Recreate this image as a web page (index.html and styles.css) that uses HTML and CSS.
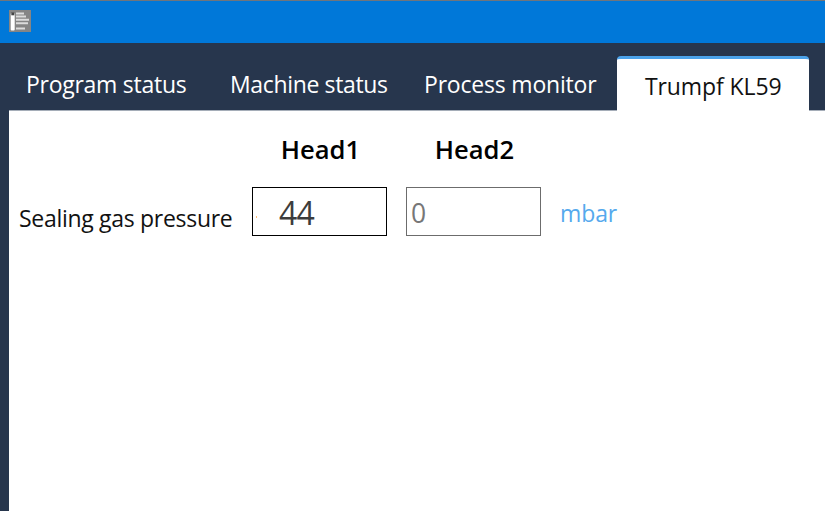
FILE: index.html
```html
<!DOCTYPE html>
<html lang="en">
<head>
<meta charset="utf-8">
<title>Machine monitor</title>
<link rel="stylesheet" href="styles.css">
</head>
<body>
<div class="window">
  <header class="titlebar">
    <svg class="app-icon" width="22" height="22" viewBox="0 0 22 22">
      <rect width="22" height="22" fill="#858585"/>
      <rect x="1.7" y="3" width="4" height="17.5" rx="1" fill="#fff"/>
      <rect x="2.3" y="2.5" width="3" height="2.8" fill="#444"/>
      <path d="M7 3.5h8M7 6.5h10M7 9.8h13M7 13.2h12M7 18.5h9" stroke="#dcdcdc" stroke-width="2"/>
    </svg>
  </header>
  <nav class="tabs">
    <a class="tab program">Program status</a>
    <a class="tab machine">Machine status</a>
    <a class="tab process">Process monitor</a>
    <a class="tab active">Trumpf KL59</a>
  </nav>
  <main class="panel">
    <div class="readings">
      <span></span>
      <strong class="head">Head1</strong>
      <strong class="head">Head2</strong>
      <span></span>
      <span class="label">Sealing gas pressure</span>
      <div class="field primary">44</div>
      <div class="field disabled">0</div>
      <span class="unit">mbar</span>
    </div>
  </main>
</div>
</body>
</html>
```
FILE: styles.css
```css
* { box-sizing: border-box; }
body {
  margin: 0;
  background: #27364d;
  font-family: "Open Sans", sans-serif;
  font-size: 23px;
  white-space: nowrap;
}
.window { height: 511px; display: flex; flex-direction: column; overflow: hidden; }
.titlebar {
  flex: none;
  height: 43px;
  padding: 9px 0 0 9px;
  border-top: 1px solid #70757c;
  background: #0078d9;
}
.app-icon { display: block; }
.tabs {
  flex: none;
  display: flex;
  height: 67px;
  padding: 13px 0 0 9px;
  line-height: 32px;
  color: #fff;
}
.tab { padding: 12px 0 0 17px; }
.program { width: 204px; letter-spacing: -0.27px; }
.machine { width: 194px; letter-spacing: -0.35px; }
.process { width: 210px; letter-spacing: -0.2px; }
.active {
  width: 192px;
  margin-bottom: -1px;
  padding: 11px 0 0 28px;
  border-top: 3px solid #4ba3eb;
  border-radius: 4px 4px 0 0;
  position: relative;
  background: #fff;
  color: #111;
  letter-spacing: -0.1px;
}
.panel {
  flex: 1;
  margin-left: 9px;
  padding: 21px 0 0 10px;
  border-top: 1px solid #a5adb8;
  background: #fff;
}
.readings {
  display: grid;
  grid-template-columns: 214px 135px 135px auto;
  grid-template-rows: 36px 49px;
  column-gap: 19px;
  row-gap: 19px;
  justify-content: start;
}
.head { padding-left: 2px; font-size: 25.6px; font-weight: 600; line-height: 36px; text-align: center; color: #000; }
.label { padding-top: 15px; line-height: 32px; color: #111; letter-spacing: -0.3px; }
.field { height: 49px; border: 1px solid #000; }
.primary {
  padding-left: 26px;
  background: linear-gradient(#ffbe78, #ffbe78) 3px 28px / 1px 2px no-repeat;
  font-size: 32px;
  line-height: 49px;
  letter-spacing: -0.9px;
  color: #3c3c3c;
}
.disabled { padding-left: 4px; border-color: #6c6c6c; font-size: 26.5px; line-height: 50px; color: #777; }
.unit { padding-top: 10px; line-height: 32px; color: #55a9ed; letter-spacing: -0.1px; }
```
